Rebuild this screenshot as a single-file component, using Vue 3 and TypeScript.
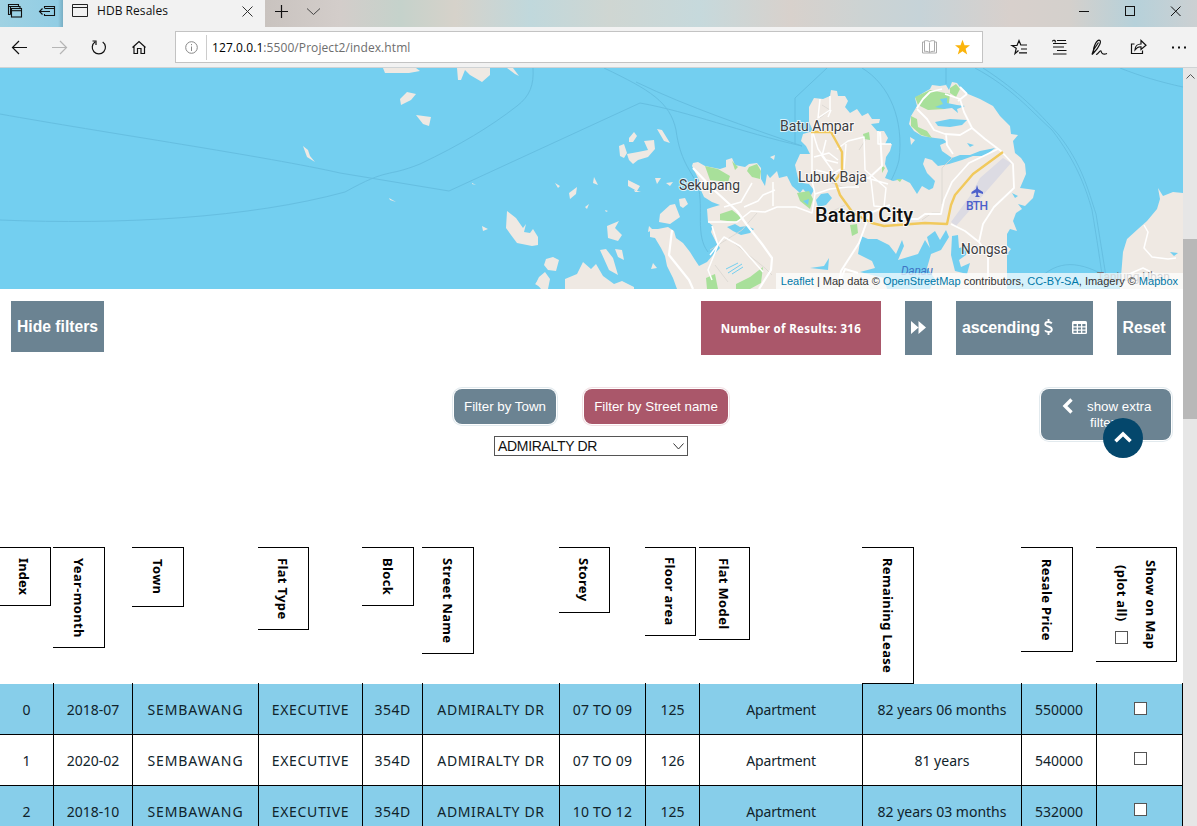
<script setup lang="ts">
interface Column {
  label: string
  width: number
  boxWidth: number
  boxHeight: number
}

const columns: Column[] = [
  { label: 'Index', width: 53, boxWidth: 51, boxHeight: 59 },
  { label: 'Year-month', width: 79, boxWidth: 52, boxHeight: 101 },
  { label: 'Town', width: 126, boxWidth: 52, boxHeight: 60 },
  { label: 'Flat Type', width: 104, boxWidth: 51, boxHeight: 83 },
  { label: 'Block', width: 60, boxWidth: 52, boxHeight: 59 },
  { label: 'Street Name', width: 137, boxWidth: 52, boxHeight: 107 },
  { label: 'Storey', width: 86, boxWidth: 51, boxHeight: 66 },
  { label: 'Floor area', width: 54, boxWidth: 51, boxHeight: 89 },
  { label: 'Flat Model', width: 163, boxWidth: 51, boxHeight: 93 },
  { label: 'Remaining Lease', width: 159, boxWidth: 52, boxHeight: 137 },
  { label: 'Resale Price', width: 75, boxWidth: 52, boxHeight: 105 },
  { label: 'Show on Map', width: 87, boxWidth: 81, boxHeight: 115 },
]
const headColumns = columns.map((c) => c.width + 'px').join(' ')
const bodyColumns = columns
  .map((c, i) => c.width + (i === 0 ? 1 : i === columns.length - 1 ? -1 : 0) + 'px')
  .join(' ')

const rows: string[][] = [
  ['0', '2018-07', 'SEMBAWANG', 'EXECUTIVE', '354D', 'ADMIRALTY DR', '07 TO 09', '125', 'Apartment', '82 years 06 months', '550000'],
  ['1', '2020-02', 'SEMBAWANG', 'EXECUTIVE', '354D', 'ADMIRALTY DR', '07 TO 09', '126', 'Apartment', '81 years', '540000'],
  ['2', '2018-10', 'SEMBAWANG', 'EXECUTIVE', '354D', 'ADMIRALTY DR', '10 TO 12', '125', 'Apartment', '82 years 03 months', '532000'],
]
</script>

<template>
  <div class="window">
    <header class="tabbar">
      <div class="tab-tools">
        <svg width="62" height="27" viewBox="0 0 62 27" fill="none" stroke="#111" stroke-width="1.1">
          <path d="M10.5 14.500H8.500V4.500H18.500V6.500M10.500 14.500V6.500H20V8.500M8.500 6.500H18" />
          <rect x="11.500" y="8.500" width="10" height="8.500" />
          <path d="M11.500 10.700H21.500" />
          <path d="M44.500 8V6.500H54.500V15.500H44.500V14M44.500 8.500H54.500M39.500 11.500H50M42.500 8.500L39.500 11.500L42.500 14.500" />
        </svg>
      </div>
      <div class="tab">
        <svg width="16" height="13" viewBox="0 0 16 13" fill="none" stroke="#222"><path d="M.5.5H15.500V12.500H.5ZM.5 3.500H15.500" /></svg>
        <span class="tab-title">HDB Resales</span>
        <svg class="tab-close" width="11" height="11" viewBox="0 0 11 11" stroke="#333" fill="none"><path d="M.5.5L10.500 10.500M10.500.5L.5 10.500" /></svg>
      </div>
      <svg class="tab-actions" width="56" height="27" viewBox="0 0 56 27" fill="none" stroke="#111">
        <path d="M10 11.500H23M16.500 5V18" stroke-width="1.200" />
        <path d="M42 8.500L48.500 14.500L55 8.500" stroke="#444" />
      </svg>
      <svg class="win-buttons" width="130" height="27" viewBox="0 0 130 27" fill="none" stroke="#111">
        <path d="M12 11.500H22M104 6.500L113.500 16M113.500 6.500L104 16" />
        <rect x="58.500" y="6.500" width="9" height="9" />
      </svg>
    </header>

    <nav class="toolbar">
      <svg width="175" height="40" viewBox="0 27 175 40" fill="none" stroke="#111" stroke-width="1.200">
        <path d="M12.500 47.500H27M19 41L12.500 47.500L19 54" />
        <path d="M52 47.500H66.500M60 41L66.500 47.500L60 54" stroke="#b5b5b5" />
        <path d="M102.700 42A6.600 6.600 0 1 1 95 42M92.500 41H96V45" />
        <path d="M132.500 47.500L139 41.500L145.500 47.500M134 46.500V53.500H137.500V48.500H141V53.500H144.500V46.500" />
      </svg>
      <div class="address">
        <svg class="info" width="13" height="13" viewBox="0 0 13 13" fill="none" stroke="#888"><circle cx="6.500" cy="6.500" r="5.800" /><path d="M6.500 5.500V10M6.500 3V4.200" /></svg>
        <span class="sep"></span>
        <span class="url"><b>127.0.0.1</b>:5500/Project2/index.html</span>
        <svg class="book" width="15" height="14" viewBox="0 0 15 14" fill="none" stroke="#aaa"><path d="M7.500 2.500V12.500M7.500 1.500C5.500.5 3.500.5 2.500.8V11.500C4 11 6 11.500 7.500 12.500C9 11.500 11 11 12.500 11.500V.8C11.500.5 9.500.5 7.500 1.500M2.500 2H.5V13H14.500V2H12.500" /></svg>
        <svg class="fav" width="17" height="17" viewBox="0 0 17 17" fill="#fbb40b"><path d="M8.500.8L10.500 6.300H16L11.600 9.800L13.200 15.500L8.500 12.200L3.800 15.500L5.400 9.800L1 6.300H6.500Z" /></svg>
      </div>
      <svg width="214" height="40" viewBox="983 27 214 40" fill="none" stroke="#111" stroke-width="1.200">
        <path d="M1018.500 50.500L1015 53.500L1016.200 48.300L1012 45.500H1017L1019 40.500L1020.800 45H1027M1021 49H1027M1019 52.800H1027" />
        <path d="M1053 43.500H1066.500M1057 40.500H1066M1052.500 41.500C1052.500 39.500 1056.500 40 1055 42.500M1053 47H1064M1057 50.500H1066.500M1053 54H1066.500" />
        <path d="M1094 52.500C1092.500 49.500 1095.500 41 1099 40.200C1102.500 40.500 1099 47.500 1094 52.500L1092 54.500L1093.500 50L1098.500 42.500M1096 54.500C1098.500 54 1099.500 50 1101 51C1101.500 53.500 1103 55 1107 53.500" />
        <path d="M1134.500 44H1131.500V53.500H1142.500V50.500M1135 50C1135 46 1138 44 1141 44V40.500L1146 45.300L1141 49.500V46.800C1138 46.500 1136.500 48 1135 50Z" />
        <path d="M1172 47.500H1174M1178 47.500H1180M1184 47.500H1186" stroke-width="2" />
      </svg>
    </nav>

    <div class="viewport">
      <main class="page">
        <section class="map">
          <svg width="1183" height="221" viewBox="0 68 1183 221">
            <rect x="0" y="68" width="1183" height="221" fill="#73cff0" />
            <g fill="none" stroke="#61b9dc" stroke-width="1" opacity=".75">
              <path d="M0 114C100 132 270 157 340 173L449 191L640 103C690 112 740 132 802 146" />
              <path d="M0 220C120 225 250 218 345 192C390 167 385 178 420 164C460 145 490 127 517 106C530 96 534 85 533 68" />
              <path d="M604 68C650 90 670 102 676 130C680 160 690 170 698 185C704 210 695 235 708 252M636 82C690 108 745 126 802 146" />
              <path d="M827 68L795 98V144M862 68C890 85 904 120 899 160C896 172 892 178 889 185M946 68V84" />
              <path d="M975 68C1012 88 1030 110 1052 130C1075 160 1085 185 1092 210C1097 240 1100 260 1104 289M983 68C1020 92 1038 112 1058 134C1082 164 1088 190 1096 214L1108 289M1120 68C1140 76 1160 82 1183 87M1030 289C1050 263 1070 258 1100 273" />
            </g>
            <g fill="#efe9e3">
              <path d="M650 229L658 229L668 227L674 231L676 238L683 243L690 252L695 260L699 266L707 262L713 255L720 248L716 242L711 232L713 226L708 222L707 209L713 207L720 205L712 202L704 197L700 188L699 180L695 172L692 166L693 163L698 162L705 166L720 169L726 167L726 160L732 158L735 165L745 167L749 164L757 163L761 168L761 179L765 186L767 174L770 178L777 171L779 178L787 176L792 186L800 193L803 189L810 197L814 190L809 184L803 183L798 178L795 165L800 154L810 154L806 146L801 141L803 134L813 131L809 122L809 107L814 98L823 99L830 96L831 90L837 91L838 96L845 96L848 101L845 107L850 113L857 109L862 116L868 113L872 119L880 119L879 123L871 124L877 131L884 131L888 138L885 144L892 144L890 151L886 157L885 164L888 171L885 178L893 181L902 179L910 183L917 194L922 186L929 190L933 188L935 181L927 173L923 164L925 158L932 160L938 166L949 164L962 160L973 156L985 156L995 148L980 151L970 155L960 155L952 158L942 151L940 145L947 142L943 139L935 138L922 136L914 131L909 124L911 116L917 106L915 98L923 93L930 89L932 85L940 86L946 85L949 90L952 82L957 83L960 87L968 94L980 99L993 106L1000 116L1010 126L1011 134L1018 135L1013 141L1015 153L1021 158L1025 164L1026 174L1020 188L1028 189L1035 190L1033 198L1025 206L1018 204L1022 209L1016 213L1013 221L1017 231L1010 229L1007 234L1007 246L1011 249L1007 254V289H677L673 278L667 266L665 256L661 248L655 238L650 237Z" />
              <path d="M1183 193L1173 192L1163 196L1158 188L1160 199L1157 209L1147 221L1138 229L1127 239L1123 252L1120 289H1183Z" />
              <path d="M383 68H416L420 71L409 73H385ZM457 68H490V75L482 82L470 75L465 70L461 80H458ZM507 68H513L519 76L515 74ZM400 99L407 92L416 94L411 100L401 105ZM416 115L431 117L429 126L423 124ZM303 146L308 150L310 156L315 162L307 157Z" />
              <path d="M507 211L516 218L523 228L526 224L524 232L530 233L533 229L538 237L538 245L532 246L517 243L511 235L506 228ZM546 259L553 257L559 260L556 271L548 270L544 265ZM539 277L545 272L550 279L548 289H541L536 283ZM565 279L577 274L583 262L591 269L596 264L603 276L614 284L622 281L634 287V289H565ZM600 250L606 249L613 258L618 275L609 270Z" />
              <path d="M619 146L624 144L627 153L624 158L620 156ZM629 138L634 132L637 136L633 142L629 142ZM627 154L638 152L648 150L644 141L654 140L655 149L648 157L638 160L633 164L629 160ZM657 129L662 130L670 143L664 141ZM628 180L640 186L637 191L628 186ZM569 193L577 187L576 194L570 199ZM594 177L598 185L593 183ZM607 226L619 221L615 228L622 235L618 241L608 238ZM615 249L622 250L624 260L618 257ZM679 199L685 198L688 204L683 208L680 206ZM660 214L670 205L675 204L680 217L670 224L659 222ZM535 284L538 281L540 287ZM655 178L661 178L657 184ZM634 190L641 192L635 192ZM649 226L653 230L648 232ZM770 157L775 155L774 160ZM666 183L673 182L670 186ZM482 226L488 229L483 231ZM472 183L476 185L472 184ZM653 263L657 268L651 269ZM910 137L915 140L911 145ZM555 183L560 186L558 188ZM389 198L396 202L390 200ZM585 207L589 204L587 209ZM605 210L608 211L606 212Z" />
            </g>
            <g fill="#a8e09a">
              <path d="M705 166L718 169L730 176L728 182L710 180ZM749 167L757 164L761 171L760 179L752 177L747 171ZM720 214L732 210L742 218L735 222L720 220ZM797 193L809 191L813 199L810 209L800 201ZM863 134L869 132L870 140L864 139ZM850 225L857 224L858 233L852 236ZM736 284L750 277L763 267L761 283L750 289H736ZM706 278L715 274L718 289H707Z" />
              <path d="M915 97L930 90L940 92L950 94L949 103L945 109L928 110L918 105ZM911 116L917 119L918 127L927 131L932 138L921 135L911 126ZM950 88L956 84L960 89L956 97L950 93ZM896 179H902L900 182ZM882 165L885 168L882 173ZM732 161L738 167L735 170Z" />
            </g>
            <g fill="#73cff0">
              <path d="M727 227L735 224L740 227L747 226L754 229L750 233L741 235L733 231ZM816 200L821 194L828 193L832 198L826 205L818 207ZM803 201L809 199L808 205ZM935 122L950 119L967 120L962 125L950 127L938 126ZM967 143L974 145L970 147ZM940 99L947 98L947 103L957 105L965 106L957 109L958 113L952 108L944 109L935 107L943 104ZM861 236L868 239L877 239L889 245L896 254L902 240L904 246L898 260L918 254L925 240L930 248L927 237L935 231L940 240L946 230L949 237L941 250L931 254L927 268L935 279L930 289H887L884 278L872 275L860 272L875 268L872 261L858 254ZM952 236L958 235L959 248L968 246L966 255L959 260L961 267L970 263L967 274L955 271L951 255ZM810 268L824 266L829 258L828 270ZM887 268L900 261L892 272ZM1170 252L1178 253L1174 256ZM1012 193L1018 196L1015 198Z" />
            </g>
            <path d="M1003 158L1011 163L956 226L951 222L970 196L980 178Z" fill="#dcdbe3" />
            <g fill="none" stroke="#d9d5d1" stroke-width=".8">
              <path d="M820 118L830 110L822 105M827 181L842 187L857 186L858 178M845 205L825 215M710 250L742 230L757 213M922 220L932 213H941M866 139L859 150M953 157L942 168L942 204M730 240L765 268L772 275M715 265L728 282" />
            </g>
            <g fill="none" stroke="#fff" stroke-width="1.500" stroke-linejoin="round">
              <path d="M693 168L714 190L737 211L747 225L762 244L772 258L771 270L759 289M672 230L669 255L689 280L693 289" stroke-width="2.200" />
              <path d="M708 222H737L751 211L765 212L777 207L796 207L812 213L815 194L812 181V132M815 194L830 189L848 187H859M710 255L724 237L740 246L763 272M712 226L718 245L708 270L712 280M744 207L758 201L763 195L775 190M773 182V206M724 207L741 202L752 183" />
              <path d="M813 133L818 149L826 160L838 163M814 157L829 153L838 160M816 170L832 174L841 169M826 140L822 156L833 171M837 149L848 141L864 137L865 170L886 188L884 207L874 206L871 180M846 144L844 169M850 178H871M867 178L888 184" />
              <path d="M880 132L882 166L869 178M890 205L870 213L859 243L841 271L838 289M837 289L845 269L858 273" stroke-width="2" />
              <path d="M830 96V110L818 118L820 99M831 110L828 117M878 131V144L891 144" />
              <path d="M917 108L923 99L930 92L942 89M917 109L927 119L934 130L945 134L960 135L972 128L964 112L960 99L945 94M967 94L958 101M960 87L967 94M972 128L985 139L1001 151L1013 164L1014 188L994 207L983 224L979 242M946 134L947 145L953 154M998 149L969 163L952 182L944 200L941 214H925L918 219H903M951 224L965 231L979 242L988 254V289M897 223L890 220" stroke-width="1.800" />
              <path d="M1144 225L1148 232L1144 248L1152 257L1168 259L1176 258M1127 275L1143 268L1155 274" />
            </g>
            <path d="M811 132H831L842 152V171L835 181L840 195L853 213L872 223L884 226L925 223L947 224L951 205L955 195L973 174L1003 152" fill="none" stroke="#f1c95c" stroke-width="2.400" stroke-linejoin="round" />
            <path d="M726 269L738 263M728 273L742 264M732 274L743 267" stroke="#73cff0" stroke-width="1" />
            <path d="M977 185L978.200 189L983 192V194L978.200 192.500L978 195L980 197H975L976.500 195L976 192.500L971.500 194V192L976 189Z" fill="#4b5fcb" />
            <g class="map-label">
              <text x="780" y="131" textLength="74" lengthAdjust="spacingAndGlyphs">Batu Ampar</text>
              <text x="798" y="182" textLength="69" lengthAdjust="spacingAndGlyphs">Lubuk Baja</text>
              <text x="679" y="190" textLength="61" lengthAdjust="spacingAndGlyphs">Sekupang</text>
              <text x="961" y="254" textLength="47" lengthAdjust="spacingAndGlyphs">Nongsa</text>
            </g>
            <text class="city" x="815" y="222" textLength="98" lengthAdjust="spacingAndGlyphs">Batam City</text>
            <text class="airport" x="966" y="210" textLength="22">BTH</text>
            <text class="lake" x="901" y="275" textLength="32">Danau</text>
            <text class="uban" x="1097" y="281" textLength="73">Tanjung Uban</text>
          </svg>
          <div class="attribution"><a>Leaflet</a> | Map data © <a>OpenStreetMap</a> contributors, <a>CC-BY-SA</a>, Imagery © <a>Mapbox</a></div>
        </section>

        <section class="controls">
          <button class="block hide">Hide filters</button>
          <div class="right">
            <div class="results">Number of Results: 316</div>
            <button class="block next">
              <svg width="15" height="13" viewBox="0 0 15 13" fill="#fff"><path d="M0 0L7.500 6.500V0L15 6.500L7.500 13V6.500L0 13Z" /></svg>
            </button>
            <button class="block sort"><span>ascending</span>
              <svg class="dollar" width="9" height="16" viewBox="0 0 9 16" fill="none" stroke="#fff" stroke-width="1.900"><path d="M7.800 4.300C6.500 2.700 1.300 2 1.300 5.200C1.300 8 7.800 7 7.800 10.400C7.800 14 2 13.200 1 11.400M4.500 0V2.700M4.500 13V16" /></svg>
              <svg class="table-icon" width="15" height="13" viewBox="0 0 15 13"><rect width="15" height="13" rx="1.500" fill="#fff" /><path d="M1.500 3H4.700V5.200H1.500ZM6 3H9V5.200H6ZM10.300 3H13.500V5.200H10.300ZM1.500 6.400H4.700V8.500H1.500ZM6 6.400H9V8.500H6ZM10.300 6.400H13.500V8.500H10.300ZM1.500 9.700H4.700V11.700H1.500ZM6 9.700H9V11.700H6ZM10.300 9.700H13.500V11.700H10.300Z" fill="#6b8392" /></svg>
            </button>
            <button class="block reset">Reset</button>
          </div>
        </section>

        <section class="filters">
          <div class="choice">
            <div class="choice-row">
              <button class="pill town">Filter by Town</button>
              <button class="pill street">Filter by Street name</button>
            </div>
            <div class="select">ADMIRALTY DR
              <svg width="11" height="7" viewBox="0 0 11 7" fill="none" stroke="#333"><path d="M.5.5L5.500 6L10.500.5" /></svg>
            </div>
          </div>
          <button class="pill extra">
            <svg width="12" height="16" viewBox="0 0 12 16" fill="none" stroke="#fff" stroke-width="3.400"><path d="M9.500 1.500L3 8L9.500 14.500" /></svg>
            <span>show extra</span><em>filters</em>
          </button>
          <button class="to-top">
            <svg width="18" height="12" viewBox="0 0 18 12" fill="none" stroke="#fff" stroke-width="3.600"><path d="M1.500 10.300L9 3L16.500 10.300" /></svg>
          </button>
        </section>

        <section class="table">
          <div class="thead" :style="{ gridTemplateColumns: headColumns }">
            <div v-for="(c, i) in columns" :key="c.label" class="th" :class="{ first: i === 0, double: i === 11 }" :style="{ width: c.boxWidth + 'px', height: c.boxHeight + 'px' }">
              <span>{{ c.label }}</span>
              <span v-if="i === 11" class="plot">(plot all)<i class="box"></i></span>
            </div>
          </div>
          <div class="tbody">
            <div v-for="r in rows" :key="r[0]" class="tr" :style="{ gridTemplateColumns: bodyColumns }">
              <div v-for="(cell, i) in r" :key="i" class="td" :class="'c' + i">{{ cell }}</div>
              <div class="td"><i class="box"></i></div>
            </div>
          </div>
        </section>
      </main>
      <aside class="scrollbar">
        <svg width="14" height="16" viewBox="0 0 14 16" fill="none" stroke="#555"><path d="M3.500 10.500L7.500 6.500L11.500 10.500" /></svg>
        <div class="thumb"></div>
      </aside>
    </div>
  </div>
</template>

<style>
body { margin: 0; overflow: hidden; background: #fff; }
</style>

<style scoped>
.window { width: 1197px; height: 826px; overflow: hidden; display: flex; flex-direction: column; font-family: "Liberation Sans", Arial, sans-serif; }
svg { display: block; flex: none; }
button { border: 0; padding: 0; margin: 0; color: #fff; font-family: inherit; }
.tabbar { height: 27px; flex: none; display: flex; background: linear-gradient(90deg, #92cbe0 0, #92cbe0 62px, #c9c3bf 265px, #d3cdca 340px, #c5d2cb 400px, #d6d2ca 455px, #c0d8dc 530px, #cfd6d2 610px, #c6d9dc 700px, #d8d1cc 790px, #cdd3d3 860px, #c6d3d8 920px, #d8d0cc 1010px, #d4d0cc 1070px, #b6d1da 1135px, #ccd0d2 1197px); }
.tab-tools { width: 63px; background: linear-gradient(90deg, #a0d2e3, #91cde4 58px, #79aec3 63px); }
.tab { width: 202px; background: #f2f2f2; display: flex; align-items: flex-start; box-sizing: border-box; padding: 4px 12px 0 9px; }
.tab-title { font: 12px/14px "Open Sans", sans-serif; letter-spacing: .05px; color: #111; margin-left: 9px; }
.tab-close { margin: 2px 0 0 auto; }
.win-buttons { margin-left: auto; }
.toolbar { height: 40px; flex: none; background: #f2f2f2; border-bottom: 1px solid #cfd3d5; display: flex; }
.address { width: 808px; height: 32px; box-sizing: border-box; margin-top: 4px; background: #fff; border: 1px solid #c3c3c3; display: flex; align-items: center; }
.info { margin-left: 9px; }
.sep { width: 1px; height: 25px; background: #ccc; margin: 0 5px 0 8px; }
.url { font: 12px/16px "Open Sans", sans-serif; color: #6d6d6d; letter-spacing: .08px; padding-top: 1px; }
.url b { color: #000; font-weight: 400; }
.book { margin-left: auto; margin-right: 17px; }
.fav { margin-right: 11px; }
.viewport { flex: 1; display: flex; min-height: 0; }
.page { width: 1183px; overflow: hidden; position: relative; }
.scrollbar { width: 14px; background: #e6e6e6; display: flex; flex-direction: column; }
.thumb { margin-top: 155px; height: 180px; background: #b8b8b8; }
.map { height: 221px; position: relative; }
.map-label text { font: 14px Roboto, sans-serif; fill: #3d3d42; paint-order: stroke; stroke: rgba(255, 255, 255, .75); stroke-width: 2px; }
.city { font: 500 20px Roboto, sans-serif; fill: #111; paint-order: stroke; stroke: rgba(255, 255, 255, .8); stroke-width: 2px; }
.airport { font: 500 12px Roboto, sans-serif; fill: #4b5fcb; }
.lake { font: italic 12px Roboto, sans-serif; fill: #3f74c4; }
.uban { font: 12px Roboto, sans-serif; fill: #77777c; }
.attribution { position: absolute; right: 0; bottom: 0; height: 16px; box-sizing: border-box; padding: 0 5px; background: rgba(255, 255, 255, .7); font-size: 11px; line-height: 16px; color: #333; white-space: nowrap; }
.attribution a { color: #0078a8; }
.controls { height: 66px; padding: 12px 12px 0 11px; display: flex; justify-content: space-between; box-sizing: border-box; }
.right { display: flex; }
.block { background: #6b8392; font-weight: 700; font-size: 16px; height: 54px; display: flex; align-items: center; justify-content: center; white-space: nowrap; }
.hide { width: 93px; height: 51px; font-size: 15.700px; }
.results { width: 180px; height: 54px; background: #aa576a; color: #fff; font: 700 11.500px/55px "Noto Sans", sans-serif; letter-spacing: .35px; text-align: center; white-space: nowrap; }
.next { width: 27px; margin-left: 24px; }
.sort { width: 137px; margin-left: 24px; justify-content: flex-start; padding: 0 6px; }
.sort span { letter-spacing: -.15px; }
.dollar { margin-left: 4px; }
.table-icon { margin-left: auto; }
.next svg, .sort svg { margin-bottom: 2px; }
.reset { width: 54px; margin-left: 24px; font-size: 15.800px; }
.filters { height: 192px; box-sizing: border-box; padding: 34px 12px 0 0; display: flex; justify-content: flex-end; align-items: flex-start; }
.choice { width: 274px; margin-right: 313px; }
.choice-row { display: flex; justify-content: space-between; }
.pill { height: 35px; background: #6b8392; border-radius: 8px; font-size: 13.330px; box-shadow: 0 0 0 1px #fff, 0 0 0 2px #e2eaee; white-space: nowrap; }
.town { width: 102px; }
.street { width: 144px; background: #aa576a; box-shadow: 0 0 0 1px #fff, 0 0 0 2px #f1e0e4; }
.select { width: 194px; height: 20px; box-sizing: border-box; margin: 12px 0 0 40px; border: 1px solid #555; padding: 0 3px; display: flex; align-items: center; justify-content: space-between; font-size: 14px; letter-spacing: -.32px; color: #111; }
.extra { width: 130px; height: 51px; text-align: left; display: grid; grid-template-columns: 46px 1fr; align-content: start; padding-top: 10px; line-height: 16px; }
.extra svg { margin: -1px 0 0 21px; }
.extra em { font-style: normal; grid-column: 1 / 3; padding-left: 49px; }
.to-top { position: absolute; left: 1103px; top: 350px; width: 40px; height: 40px; border-radius: 50%; background: #04476c; display: flex; align-items: center; justify-content: center; }
.to-top svg { margin-bottom: 2px; }
.table { font-family: "Noto Sans", sans-serif; }
.thead { display: grid; height: 136px; align-items: start; position: relative; z-index: 1; }
.th { box-sizing: border-box; border: 1px solid #000; border-left: 0; writing-mode: vertical-rl; font-size: 13px; font-weight: 700; letter-spacing: .34px; display: flex; align-items: center; justify-content: center; white-space: nowrap; color: #000; }
.th.first { padding-right: 2px; letter-spacing: .1px; }
.th.double { flex-direction: column; padding: 0; gap: 11px; letter-spacing: .28px; }
.plot { display: flex; align-items: center; gap: 9px; }
.box { display: block; width: 13px; height: 13px; box-sizing: border-box; border: 1px solid #555; background: #fff; flex: none; }
.tbody { display: flex; flex-direction: column; }
.tr { display: grid; height: 51px; box-sizing: border-box; color: #10232b; }
.tr:first-child { height: 52px; }
.td { border-right: 1px solid #000; border-bottom: 1px solid #000; box-sizing: border-box; display: flex; align-items: center; justify-content: center; font-size: 14px; white-space: nowrap; }
.tr:first-child .td { padding-top: 1px; }
.td .box { margin: 0 0 3px 1px; }
.tr:first-child .box { margin-bottom: 2px; }
.c2 { letter-spacing: .9px; }
.c3, .c5 { letter-spacing: .65px; }
.c4 { letter-spacing: .5px; }
.c6 { letter-spacing: .25px; }
.c8 { letter-spacing: -.15px; }
.tr:nth-child(odd) { background: #87ceea; }
.tr:first-child { background: linear-gradient(#fff 1px, #87ceea 1px); }
</style>
